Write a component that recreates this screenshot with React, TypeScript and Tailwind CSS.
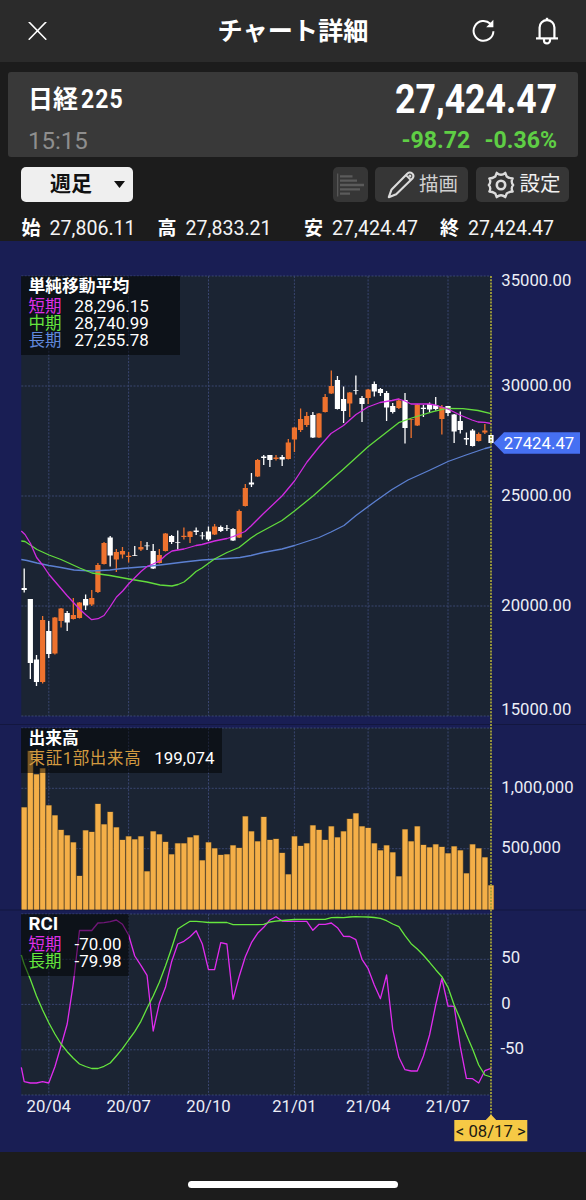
import type { ReactNode } from 'react';

type Candle = [high: number, top: number, bottom: number, low: number, up: 0 | 1];
type Point = [number, number];

const START = 24.2;
const STEP = 6.142;
const LEFT = 21.3;
const RIGHT = 491;

const candles: Candle[] = [
    [568.5, 588, 590, 592.5, 0], [599, 599, 663, 679, 0], [655, 659.5, 682, 686, 0], [616, 620, 682, 683.5, 1],
    [621, 631, 654, 658, 0], [617, 617.5, 653.5, 654.5, 1], [608, 608.5, 621, 627.5, 1], [611, 613, 622.5, 631, 0],
    [598, 615, 619, 619.5, 1], [602, 602.5, 618, 618.5, 1], [594.5, 599, 605.5, 610, 0], [590, 598, 604.5, 606, 1],
    [563, 565, 592, 593, 1], [542, 543, 564, 564.5, 1], [536, 537.5, 555.5, 566.5, 0], [549, 552, 559.5, 572, 1],
    [547, 551, 554.5, 558.5, 1], [552, 555.8, 557, 562.5, 1], [546, 555, 556, 556, 0], [541, 547, 549.5, 551, 1],
    [542, 545.3, 546.3, 550, 0], [544, 551, 568.5, 569, 0], [549, 555, 563, 563.5, 1], [533, 533.5, 551, 551.5, 1],
    [535, 536, 542, 544, 0], [530.5, 542, 543, 549.5, 0], [527.5, 535.8, 537, 539.5, 1], [531, 531.5, 537, 543, 1],
    [527.5, 530.5, 532, 535, 0], [532, 535.3, 536.3, 539.5, 0], [526.5, 531.5, 539.5, 541, 0], [524, 526.5, 534.5, 535, 1],
    [525.5, 527, 531, 532, 0], [525, 528, 529, 531, 0], [528, 529, 540.5, 541, 0], [509.5, 511, 537.5, 538, 1],
    [484, 488, 506, 506.5, 1], [473, 482.5, 484.5, 487, 0], [459, 460, 476.5, 477, 1], [455, 456.5, 458, 465, 0],
    [455, 455, 460, 467, 0], [455, 457.5, 459, 460.5, 1], [455, 457, 459.5, 466, 0], [439, 442.5, 459, 459.5, 1],
    [427, 427.5, 439.5, 452, 1], [408.5, 419, 430, 432, 1], [412, 416, 425, 427, 1], [412, 415, 437.5, 438, 0],
    [413, 413.5, 437.5, 438, 1], [394, 397, 412, 412.5, 1], [370.5, 386, 393.5, 394, 1], [376, 380, 409, 409.5, 0],
    [386.5, 399, 411, 423, 0], [392, 392.5, 403.5, 417, 1], [375.5, 390, 391, 394.5, 0], [396, 398, 404, 422, 0],
    [389, 389.5, 398, 404, 1], [381.5, 384, 391.5, 396.5, 0], [388, 389, 393, 396, 0], [391, 393, 407.5, 421, 0],
    [403, 406, 412, 413.5, 0], [398.5, 400.5, 408, 409, 1], [393, 400, 428, 443.5, 0], [419, 419, 420, 438, 1],
    [404, 404.5, 425.5, 426, 1], [405, 407.7, 409, 417, 0], [402.5, 404, 409.5, 412, 0], [397, 405, 409, 410.5, 0],
    [405, 407, 419, 434.5, 1], [406, 406, 413, 416, 0], [414, 414.5, 431.5, 443, 0], [411.5, 421, 430, 433.5, 0],
    [432.5, 438, 439.5, 445, 0], [429, 430.5, 446, 446.5, 0], [432.5, 434, 441, 441.5, 1], [424, 430.5, 432.5, 434, 1],
    [434.5, 435, 443, 443, 0],
];

const volumes = [
    807.5, 751, 774.5, 768.5, 805.5, 815.5, 830, 835.5, 842.5, 876, 830.5, 832, 804, 824.5, 812, 827.5,
    840, 836.5, 839.5, 836.5, 871.5, 831.5, 834.5, 842, 854.5, 843.5, 843.5, 837.5, 835.5, 860.5, 842.5, 848.5,
    855, 854.5, 845.5, 848, 816.5, 831.5, 841.5, 817, 840, 839, 853, 874.5, 836.5, 846, 843.5, 825.5,
    830, 840, 826.5, 837.5, 831.5, 819, 813.5, 826.5, 828, 843.5, 850.5, 845.5, 852.5, 876.5, 829.5, 841.5,
    826.5, 845, 847.5, 844.5, 847, 853.5, 846.5, 850.5, 873.5, 844.5, 848.5, 857.5, 885.5,
];

const smaShort: Point[] = [
    [21.3, 531], [25, 534.5], [30.5, 543.5], [36.6, 557.5], [43, 565.5], [49, 574.5], [61, 588.5], [67, 595.5],
    [73, 602], [80, 609.5], [86, 615], [91.7, 619.7], [98, 618.7], [104, 615.5], [110, 607], [116.5, 597],
    [122.7, 591], [129, 583.5], [135, 577.5], [141, 571.5], [147, 566.5], [153, 564], [159.5, 561], [166, 555],
    [172, 551], [184, 549], [196, 545.5], [202, 544.5], [214.5, 541], [227, 538.5], [233.3, 536.5], [245, 531.5],
    [251, 526], [263, 514], [282, 496], [294.5, 481], [307, 462], [319, 447], [331, 433.5], [343.5, 425.5],
    [356, 414.5], [368, 407], [380, 402.5], [392, 400.5], [398.5, 399], [405, 401], [411, 404], [429, 404],
    [435, 405], [448, 409], [460, 415], [472, 420], [478, 422], [485, 422.3], [491, 423.5],
];

const smaMiddle: Point[] = [
    [21.3, 541], [25, 541.5], [37, 549.5], [49, 555], [61, 559.5], [79.7, 568], [92, 573], [110, 575.5],
    [129, 579], [147, 582], [160, 585], [172, 586], [178, 584.5], [184, 582], [190, 577], [196, 571.5],
    [202, 568], [214.5, 559], [227, 552.5], [239, 547.5], [251, 538], [257, 534], [282, 520.5], [294.5, 511],
    [313, 496], [331, 480], [343, 469.5], [368, 446.7], [398.7, 422.7], [411.7, 418], [433, 411.7], [446.7, 408.3],
    [463, 408.7], [478, 410.5], [491, 413.7],
];

const smaLong: Point[] = [
    [21.3, 559.5], [27, 560.5], [37, 563], [49, 565.5], [61, 567.5], [74, 570], [92, 571], [110, 570],
    [122, 568.5], [147, 566.5], [160, 565], [172, 563.5], [184, 562], [202, 560], [227, 558.5], [240, 557.5],
    [251, 555.5], [263, 552.5], [282, 549], [294.5, 545.5], [319, 537.5], [331, 532], [344, 525.5], [356, 515.5],
    [375, 501.5], [392, 489.5], [408, 480], [429, 470.5], [448, 461.5], [466, 455], [485, 448.5], [491, 447],
];

// one value per week, starting with the first candle
const rciShort = [
    1081.7, 1083, 1083, 1081.7, 1083, 1066.7, 1045.7, 1024, 983.3, 930.5, 930.5, 930.5, 923, 922.7, 921.7, 920,
    924.3, 935, 956, 965.3, 975.3, 1031, 1003.3, 987.3, 961.7, 944, 941.3, 936.7, 930.7, 944, 969.7, 969.7,
    942.7, 944, 999.3, 976.5, 956.7, 942.7, 933.3, 927.3, 920, 916.7, 921, 921.3, 921.3, 921.3, 921.3, 930.3,
    924.3, 924.3, 923, 927.7, 936.3, 936.5, 939.7, 959.3, 968.7, 985, 998.7, 975, 1029.3, 1057.3, 1069.7, 1071,
    1071, 1056, 1035, 1005, 978.3, 1006, 1006.3, 1046.7, 1078.3, 1078.7, 1083, 1070.7, 1068.3,
];

const rciLong = [
    964.3, 979.3, 996, 1010, 1022.7, 1034, 1044, 1051.7, 1058.3, 1064, 1066.5, 1068.5, 1068.5, 1066.3, 1063, 1056,
    1048.7, 1040, 1031.7, 1021.3, 1008.3, 996, 982.3, 966, 948.3, 929, 925, 921.3, 921.3, 921.8, 922.5, 922.5,
    922.5, 922.5, 924.7, 924.7, 924.7, 924.7, 924.7, 924.3, 922, 921.2, 920.5, 920, 919.5, 919.3, 919.3, 919.3,
    919.3, 919.3, 917.7, 917.5, 917.7, 917, 916.7, 916.8, 917, 917.5, 918.3, 920.7, 924, 926.7, 935.7, 943.7,
    949, 955.3, 962.3, 969.7, 976.7, 987.3, 1005, 1019.3, 1034.7, 1049, 1065, 1075, 1077,
];

const months = [
    { x: 48.8, label: '20/04' },
    { x: 128.6, label: '20/07' },
    { x: 208.5, label: '20/10' },
    { x: 294.4, label: '21/01' },
    { x: 368.1, label: '21/04' },
    { x: 448, label: '21/07' },
];

const levels = [276, 386, 496, 606, 716, 728, 788.3, 848.7, 914, 959.3, 1004.4, 1049.8, 1095];

const axisLabels = [
    { y: 286, label: '35000.00' },
    { y: 390.7, label: '30000.00' },
    { y: 501, label: '25000.00' },
    { y: 610.7, label: '20000.00' },
    { y: 715, label: '15000.00' },
    { y: 793, label: '1,000,000' },
    { y: 852.7, label: '500,000' },
    { y: 963, label: '50' },
    { y: 1009, label: '0' },
    { y: 1054, label: '-50' },
];

const panes = [
    { top: 276, bottom: 716 },
    { top: 728, bottom: 909.5 },
    { top: 914, bottom: 1095 },
];

const prices = [
    { name: '始', value: '27,806.11', cell: 'w-[136px]' },
    { name: '高', value: '27,833.21', cell: 'w-[146.5px]' },
    { name: '安', value: '27,424.47', cell: 'w-[136px]' },
    { name: '終', value: '27,424.47', cell: '' },
];

const xAt = (i: number) => START + STEP * i;
const toPoints = (pts: Point[]) => pts.map((p) => p.join(',')).join(' ');
const weekly = (first: number, ys: number[]): Point[] => [[LEFT, first], ...ys.map((y, i): Point => [xAt(i), y])];

function Line({ points, color }: { points: Point[]; color: string }) {
    return <polyline points={toPoints(points)} fill="none" stroke={color} strokeWidth="1.3" strokeLinejoin="round" />;
}

function Chart() {
    return (
        <svg viewBox="0 241 586 911" className="block w-full h-[911px]" fontFamily="Roboto" fontSize="16.7">
            {panes.map((p) => (
                <rect key={p.top} x={LEFT} y={p.top} width={RIGHT - LEFT} height={p.bottom - p.top} fill="#1b2433" />
            ))}
            <path d="M0 724.5H586M0 910H586" stroke="#13173f" strokeWidth="1" />

            <g stroke="#3a4670" strokeWidth="1" strokeDasharray="2 1.4">
                {levels.map((y) => (
                    <line key={y} x1={LEFT} x2={RIGHT} y1={y} y2={y} />
                ))}
                {months.map((m) =>
                    panes.map((p) => <line key={m.label + p.top} x1={m.x} x2={m.x} y1={p.top} y2={p.bottom} />)
                )}
            </g>

            {candles.map(([high, top, bottom, low, up], i) => (
                <g key={i} fill={up ? '#ee722e' : '#ffffff'}>
                    <rect x={xAt(i) - 0.65} y={high} width="1.3" height={low - high} />
                    <rect x={xAt(i) - 2.6} y={top} width="5.2" height={bottom - top} opacity={bottom - top > 1 ? 1 : 0.7} />
                </g>
            ))}

            <Line points={smaLong} color="#5c80d2" />
            <Line points={smaMiddle} color="#62dc3d" />
            <Line points={smaShort} color="#d12be0" />

            {volumes.map((y, i) => (
                <g key={i}>
                    <rect x={xAt(i) - 3.07} y={y - 0.3} width="6.142" height={909.8 - y} fill="#80602e" />
                    <rect x={xAt(i) - 2.4} y={y} width="4.9" height={909.5 - y} fill="#f4af48" />
                </g>
            ))}

            <Line points={weekly(1067.3, rciShort)} color="#e02cee" />
            <Line points={weekly(955, rciLong)} color="#66e63e" />

            <line x1={RIGHT} x2={RIGHT} y1="276" y2="1116" stroke="#a3a03a" strokeWidth="1.8" strokeDasharray="2 1.2" />

            <g fill="#eceef6">
                {axisLabels.map((a) => (
                    <text key={a.label} x={a.label[0] === '-' ? 500.5 : 501.3} y={a.y}>{a.label}</text>
                ))}
                {months.map((m) => (
                    <text key={m.label} x={m.x} y="1111.7" textAnchor="middle">{m.label}</text>
                ))}
            </g>

            <path d="M493.5 443L504 432.2H580V453.8H504Z" fill="#4670f2" />
            <text x="503.8" y="448.8" fill="#fff" fontSize="16.8">27424.47</text>

            <path d="M454.3 1120H485.8L491 1114.5L496.2 1120H527.3V1141.3H454.3Z" fill="#f6c945" />
            <text x="490.8" y="1137" textAnchor="middle" fill="#1b1a12">&lt; 08/17 &gt;</text>
        </svg>
    );
}

function Legend({ title, className, children }: { title: ReactNode; className: string; children: ReactNode }) {
    return (
        <div className={`absolute left-[21px] bg-black/50 pl-[7.5px] text-[16.5px] leading-[17px] whitespace-nowrap ${className}`}>
            <div className="h-[22px] font-bold text-white leading-[20px] text-[16.8px]">{title}</div>
            {children}
        </div>
    );
}

function LegendRow({ name, value, color }: { name: string; value: string; color: string }) {
    return (
        <div className="flex h-[17px]">
            <span className={color}>{name}</span>
            <span className="ml-[13px] text-[16.9px] text-white">{value}</span>
        </div>
    );
}

export default function App() {
    return (
        <div className="w-[586px] h-[1200px] overflow-hidden bg-[#1c1c1c] text-white font-['Roboto','Noto_Sans_CJK_JP',sans-serif]">
            <header className="relative flex h-[62px] items-center justify-between bg-[#2b2b2b] pl-[28px] pr-[28px]">
                <svg className="size-[19px]" viewBox="0 0 19 19" stroke="#fff" strokeWidth="1.6" strokeLinecap="round">
                    <path d="M1.2 .2L17.8 17.2M17.8 .2L1.2 17.2" />
                </svg>
                <h1 className="absolute inset-x-0 text-center text-[25.2px] leading-[63px] font-bold">チャート詳細</h1>
                <div className="flex items-center gap-[40px]">
                    <svg className="size-[24px]" viewBox="0 0 24 24" fill="none" stroke="#fff" strokeWidth="2">
                        <path d="M21.4 12.2A9.9 9.9 0 1 1 18.4 4.8" />
                        <path d="M21.4 .8V8.2H14.2Z" fill="#fff" stroke="none" />
                    </svg>
                    <svg className="w-[22px] h-[28px]" viewBox="0 0 22 28" fill="none" stroke="#fff" strokeWidth="2.2">
                        <path d="M0 21.4H22" />
                        <path d="M3.6 21V10.5A7.4 7.4 0 0 1 18.4 10.5V21" />
                        <path d="M11 .8V3.5" strokeWidth="2.4" />
                        <path d="M8 22V23.4A3 3 0 0 0 14 23.4V22" />
                    </svg>
                </div>
            </header>

            <section className="mx-2 mt-[10px] flex h-[85px] justify-between rounded-[3px] bg-[#393939] pl-[20px] pr-[21px]">
                <div>
                    <div className="mt-[10px] flex h-[36px] text-[25px] leading-[36px] font-bold">
                        <span>日経</span>
                        <span className="ml-[3px] origin-left scale-x-[0.92] tracking-[1.2px]">225</span>
                    </div>
                    <div className="text-[24px] leading-[46px] text-[#8e8e8e]">15:15</div>
                </div>
                <div className="text-right">
                    <div className="h-[54px] origin-right scale-x-[0.89] text-[40px] leading-[56px] font-bold">27,424.47</div>
                    <div className="flex origin-right scale-x-[0.95] justify-end gap-[15px] text-[24.3px] leading-[28px] font-bold text-[#5fce45]">
                        <span>-98.72</span>
                        <span>-0.36%</span>
                    </div>
                </div>
            </section>

            <div className="mt-[10px] flex h-[35px] pl-[21px] pr-[17px]">
                <button className="flex w-[112px] items-center rounded-[5px] bg-[#efefef] pl-[29px] text-[#111]">
                    <span className="w-[64px] text-left text-[21px] font-bold">週足</span>
                    <svg className="w-[11px] h-[7px]" viewBox="0 0 11 7"><path d="M0 0H11L5.5 7Z" fill="#111" /></svg>
                </button>
                <button className="ml-auto flex w-[35px] items-center justify-center rounded-[5px] bg-[#363636]">
                    <svg className="w-[27px] h-[24px]" viewBox="0 0 27 24" stroke="#5b5b5b" strokeWidth="2.3">
                        <path d="M.7 .5V23.5" strokeWidth="1.2" />
                        <path d="M3 3.4H15.5M3 7.7H20M3 12H27M3 16.3H23M3 20.6H13" />
                    </svg>
                </button>
                <button className="ml-[7.5px] flex w-[93px] items-center rounded-[5px] bg-[#363636] pl-[12px] text-[19.5px] text-[#d0d0d0]">
                    <svg className="mr-[4px] w-[28px] h-[28px] shrink-0" viewBox="0 0 28 28" fill="none" stroke="#dcdcdc" strokeWidth="2.1" strokeLinejoin="round">
                        <path d="M1.8 26.2L4.4 18.8L20.2 2.7Q22.8 .4 25.2 2.6T25.4 7.6L9.2 23.2Z" />
                        <path d="M18.9 4.2L23.8 9" strokeWidth="1.8" />
                        <circle cx="22.9" cy="5.1" r=".9" strokeWidth="1.2" />
                    </svg>
                    <span>描画</span>
                </button>
                <button className="ml-[7.5px] flex w-[93.5px] items-center rounded-[5px] bg-[#363636] pl-[11px] text-[20.5px] text-[#f0f0f0]">
                    <svg className="mr-[5px] w-[28px] h-[28px] shrink-0" viewBox="0 0 28 28" fill="none" stroke="#dcdcdc" strokeWidth="2.3" strokeLinejoin="round">
                        <path d="M9.7 1.8Q14 5.6 18.3 1.8L19.7 5.5Q22.6 7.5 25.7 7.5Q23.5 11 26.2 14Q23.5 17 25.7 20.5Q22.6 20.5 19.7 22.5L18.3 26.2Q14 22.4 9.7 26.2L8.3 22.5Q5.4 20.5 2.3 20.5Q4.5 17 1.8 14Q4.5 11 2.3 7.5Q5.4 7.5 8.3 5.5Z" />
                        <circle cx="14" cy="14" r="4.2" strokeWidth="2.6" />
                    </svg>
                    <span>設定</span>
                </button>
            </div>

            <div className="flex h-[39px] pl-[21.5px] pt-[12px] text-[19px] leading-[30px]">
                {prices.map((p) => (
                    <div key={p.name} className={`flex shrink-0 ${p.cell}`}>
                        <span className="w-[28px] font-bold">{p.name}</span>
                        <span className="text-[19.6px] text-[#f4f4f4]">{p.value}</span>
                    </div>
                ))}
            </div>

            <main className="relative h-[911px] bg-[#191e54]">
                <Chart />
                <Legend title="単純移動平均" className="top-[35px] h-[79px] w-[159px]">
                    <LegendRow name="短期" value="28,296.15" color="text-[#dd2fe6]" />
                    <LegendRow name="中期" value="28,740.99" color="text-[#66e63e]" />
                    <LegendRow name="長期" value="27,255.78" color="text-[#6189dc]" />
                </Legend>
                <Legend title="出来高" className="top-[487px] h-[45px] w-[201px]">
                    <LegendRow name="東証1部出来高" value="199,074" color="text-[#d39a40] tracking-[0.65px]" />
                </Legend>
                <Legend title={<span className="text-[18.8px]">RCI</span>} className="top-[673px] h-[62px] w-[108px]">
                    <LegendRow name="短期" value="-70.00" color="text-[#dd2fe6]" />
                    <LegendRow name="長期" value="-79.98" color="text-[#66e63e]" />
                </Legend>
            </main>

            <footer className="flex h-12 justify-center pt-[29px]">
                <div className="h-[7px] w-[210px] rounded-full bg-white" />
            </footer>
        </div>
    );
}
